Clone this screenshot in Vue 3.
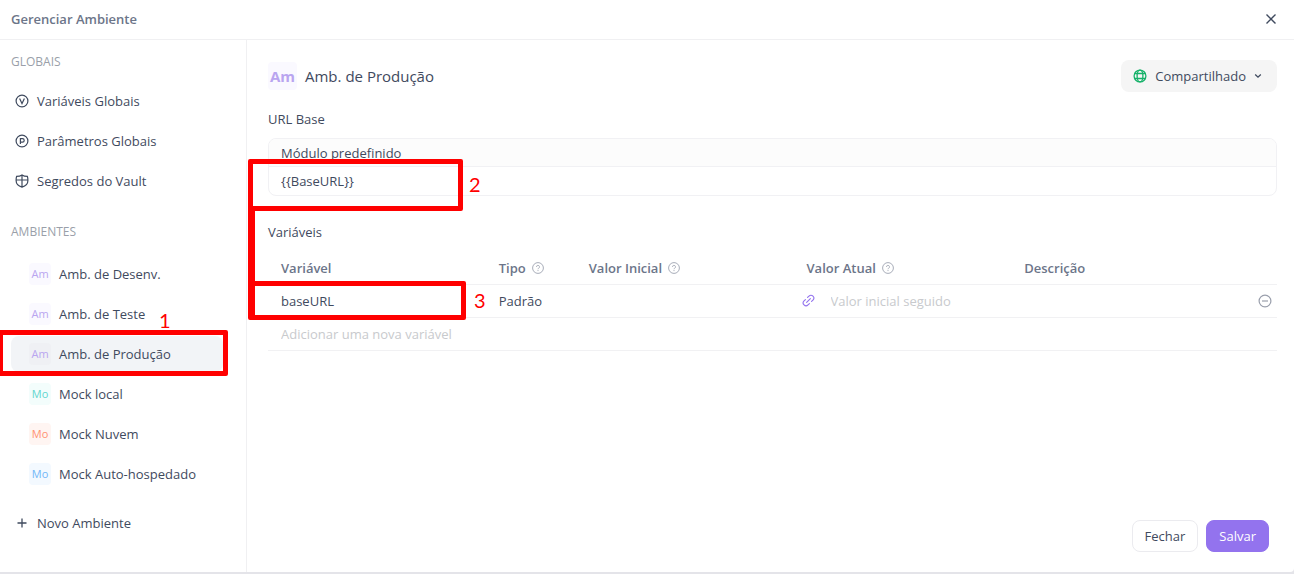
<script setup>
import { ref } from 'vue'

const globals = [
  { name: 'Variáveis Globais', icon: 'variable' },
  { name: 'Parâmetros Globais', icon: 'parameter' },
  { name: 'Segredos do Vault', icon: 'vault' }
]

const environments = [
  { name: 'Amb. de Desenv.', short: 'Am', tone: 'purple' },
  { name: 'Amb. de Teste', short: 'Am', tone: 'purple' },
  { name: 'Amb. de Produção', short: 'Am', tone: 'purple' },
  { name: 'Mock local', short: 'Mo', tone: 'teal' },
  { name: 'Mock Nuvem', short: 'Mo', tone: 'orange' },
  { name: 'Mock Auto-hospedado', short: 'Mo', tone: 'blue' }
]

const columns = [
  { label: 'Variável', help: false },
  { label: 'Tipo', help: true },
  { label: 'Valor Inicial', help: true },
  { label: 'Valor Atual', help: true },
  { label: 'Descrição', help: false }
]

const selected = ref('Amb. de Produção')
const baseUrl = ref('{{BaseURL}}')
const variableName = ref('baseURL')
const newVariable = ref('')
const currentValue = ref('')
</script>

<template>
  <div class="dialog">
    <header class="topbar">
      <h1>Gerenciar Ambiente</h1>
      <button class="plain close" type="button" aria-label="Fechar janela">
        <svg width="12" height="12" viewBox="0 0 12 12" fill="none" stroke="currentColor" stroke-width="1.4">
          <path d="M1.5 1.5l9 9M10.5 1.5l-9 9" />
        </svg>
      </button>
    </header>

    <div class="body">
      <nav class="sidebar">
        <h2>GLOBAIS</h2>
        <ul>
          <li v-for="item in globals" :key="item.name">
            <button class="plain item" type="button">
              <svg width="14" height="14" viewBox="0 0 14 14" fill="none" stroke="currentColor" stroke-width="1.2">
                <template v-if="item.icon === 'variable'">
                  <circle cx="7" cy="7" r="5.9" />
                  <path d="M4.6 4.6L7 9.6l2.4-5" />
                </template>
                <template v-else-if="item.icon === 'parameter'">
                  <circle cx="7" cy="7" r="5.9" />
                  <path d="M5.4 10V4.7h2.1a1.7 1.7 0 010 3.4H5.4" />
                </template>
                <template v-else>
                  <path d="M7 .9C5.500 2 3.500 2.400 1.600 2.400 1.100 3.600 1.100 5 1.100 6.500c0 3.200 2.300 5.500 5.900 6.600 3.600-1.100 5.900-3.400 5.900-6.600 0-1.500 0-2.900-.5-4.100C10.500 2.400 8.500 2 7 .9zM7 1v12M1.200 6h11.600" />
                </template>
              </svg>
              <span>{{ item.name }}</span>
            </button>
          </li>
        </ul>

        <h2 class="second">AMBIENTES</h2>
        <ul class="envs">
          <li v-for="env in environments" :key="env.name">
            <button
              class="plain item env"
              :class="{ active: env.name === selected }"
              type="button"
              @click="selected = env.name"
            >
              <span class="tag" :class="env.tone">{{ env.short }}</span>
              <span>{{ env.name }}</span>
            </button>
          </li>
        </ul>

        <button class="plain item add" type="button">
          <svg width="14" height="14" viewBox="0 0 14 14" fill="none" stroke="currentColor" stroke-width="1.3">
            <path d="M7 2.500v9M2.500 7h9" />
          </svg>
          <span>Novo Ambiente</span>
        </button>
      </nav>

      <main class="content">
        <div class="title-row">
          <span class="tag large purple">Am</span>
          <span class="title">{{ selected }}</span>
          <button class="share" type="button">
            <svg class="globe" width="14" height="14" viewBox="0 0 14 14" fill="none" stroke="currentColor" stroke-width="1.3">
              <circle cx="7" cy="7" r="5.900" />
              <ellipse cx="7" cy="7" rx="2.900" ry="5.900" />
              <path d="M1.700 4.500h10.600M1.700 9.500h10.600" />
            </svg>
            <span>Compartilhado</span>
            <svg width="8" height="8" viewBox="0 0 8 8" fill="none" stroke="currentColor" stroke-width="1.3">
              <path d="M1.200 2.500L4 5.200l2.800-2.700" />
            </svg>
          </button>
        </div>

        <label class="section" for="base-url">URL Base</label>
        <div class="module">
          <div class="module-head">Módulo predefinido</div>
          <input id="base-url" v-model="baseUrl" type="text" />
        </div>

        <h3 class="section variables">Variáveis</h3>
        <table>
          <colgroup>
            <col />
            <col class="type-col" />
            <col />
            <col />
            <col />
            <col class="action-col" />
          </colgroup>
          <thead>
            <tr>
              <th v-for="col in columns" :key="col.label" scope="col">
                <span class="head">
                  {{ col.label }}
                  <svg v-if="col.help" width="12" height="12" viewBox="0 0 12 12" fill="none" stroke="currentColor" stroke-width="1">
                    <circle cx="6" cy="6" r="5.400" />
                    <path d="M4.500 4.900a1.500 1.500 0 112.200 1.300c-.5.3-.7.5-.7 1M6 8.100v1" />
                  </svg>
                </span>
              </th>
              <td></td>
            </tr>
          </thead>
          <tbody>
            <tr>
              <td><input v-model="variableName" type="text" aria-label="Variável" /></td>
              <td>Padrão</td>
              <td></td>
              <td class="current">
                <span class="linked">
                  <svg width="13" height="13" viewBox="0 0 14 14" fill="none" stroke="currentColor" stroke-width="1.2" stroke-linecap="round">
                    <path d="M5 9l4-4M6 3.700l1.500-1.500a3 3 0 014.300 4.300L10.300 8M8 10.300l-1.500 1.500a3 3 0 01-4.300-4.300L3.700 6" />
                  </svg>
                  <input v-model="currentValue" type="text" placeholder="Valor inicial seguido" aria-label="Valor Atual" />
                </span>
              </td>
              <td></td>
              <td class="action">
                <button class="plain remove" type="button" aria-label="Remover variável">
                  <svg width="14" height="14" viewBox="0 0 14 14" fill="none" stroke="currentColor" stroke-width="1.200">
                    <circle cx="7" cy="7" r="5.900" />
                    <path d="M4 7h6" />
                  </svg>
                </button>
              </td>
            </tr>
            <tr>
              <td colspan="6">
                <input v-model="newVariable" type="text" placeholder="Adicionar uma nova variável" aria-label="Nova variável" />
              </td>
            </tr>
          </tbody>
        </table>

        <footer>
          <button class="btn" type="button">Fechar</button>
          <button class="btn primary" type="button">Salvar</button>
        </footer>
      </main>
    </div>

    <div class="mark mark-env"></div>
    <span class="number number-env">1</span>
    <div class="mark mark-url"></div>
    <span class="number number-url">2</span>
    <div class="mark-link"></div>
    <div class="mark mark-variable"></div>
    <span class="number number-variable">3</span>
  </div>
</template>

<style>
html,
body,
#app {
  height: 100%;
}

body {
  background: #e4e4e9;
  overflow: hidden;
}
</style>

<style scoped>
* {
  box-sizing: border-box;
}

.dialog {
  position: relative;
  display: flex;
  flex-direction: column;
  height: calc(100% - 2px);
  background: #fff;
  border-radius: 0 0 4px 0;
  color: #3f4a5e;
  font: 13px/20px "Open Sans", "Noto Sans", sans-serif;
}

button,
input {
  font: inherit;
  color: inherit;
}

button {
  cursor: pointer;
}

.plain {
  padding: 0;
  border: 0;
  background: none;
}

svg {
  flex: none;
  display: block;
}

.topbar {
  display: flex;
  align-items: center;
  justify-content: space-between;
  height: 40px;
  padding: 0 17px 1px 11px;
  border-bottom: 1px solid #f0f0f2;
}

h1 {
  margin: 0;
  color: #6c7589;
  font-size: 13px;
  font-weight: 600;
}

.body {
  display: flex;
  flex: 1;
}

.sidebar {
  width: 247px;
  padding: 12px 23px 0 11px;
  border-right: 1px solid #f0f0f2;
}

h2 {
  margin: 0 0 9px;
  color: #9a9fa9;
  font-size: 12px;
  line-height: 20px;
  font-weight: 400;
}

.second {
  margin-top: 21px;
}

ul {
  margin: 0;
  padding: 0;
  list-style: none;
}

.item {
  display: flex;
  align-items: center;
  gap: 8px;
  width: 100%;
  height: 40px;
  padding-left: 4px;
  text-align: left;
}

.envs {
  padding-top: 3px;
}

.envs li {
  padding: 2px 0;
}

.env {
  height: 36px;
  padding-left: 18px;
  border-radius: 8px;
}

.active {
  background: #f2f4f7;
}

.add {
  margin-top: 9px;
}

.tag {
  width: 22px;
  height: 22px;
  border-radius: 4px;
  font-size: 11px;
  line-height: 22px;
  text-align: center;
}

.purple {
  background: #faf9ff;
  color: #b9a5f0;
}

.active .purple {
  background: #eff0f4;
}

.teal {
  background: #f3fdfc;
  color: #62d6cf;
}

.orange {
  background: #fff5f2;
  color: #ff9272;
}

.blue {
  background: #f3f9ff;
  color: #71b7f8;
}

.large {
  width: 29px;
  height: 28px;
  font-size: 15px;
  font-weight: 700;
  line-height: 28px;
}

.content {
  display: flex;
  flex: 1;
  flex-direction: column;
  min-width: 0;
  padding: 20px 17px 20px 21px;
}

.title-row {
  display: flex;
  align-items: center;
  gap: 8px;
  height: 32px;
  margin-bottom: 17px;
}

.title {
  font-size: 15px;
}

.share {
  display: flex;
  align-items: center;
  gap: 8px;
  height: 32px;
  margin-left: auto;
  padding: 0 15px 0 12px;
  border: 0;
  border-radius: 8px;
  background: #f5f5f5;
}

.globe {
  color: #17b26a;
}

.section {
  margin: 0;
  font-size: 13px;
  font-weight: 400;
  line-height: 20px;
}

.module {
  margin-top: 9px;
  border: 1px solid #f1f1f4;
  border-radius: 8px;
  overflow: hidden;
}

.module-head {
  height: 28px;
  padding: 0 12px;
  border-bottom: 1px solid #f1f1f4;
  background: #fcfcfc;
  line-height: 28px;
}

input {
  display: block;
  width: 100%;
  height: 28px;
  padding: 0;
  border: 0;
  outline: 0;
  background: none;
}

input::placeholder {
  color: #c8cacd;
  opacity: 1;
}

.module input {
  padding: 0 12px;
}

.variables {
  margin-top: 26px;
}

table {
  width: 100%;
  margin-top: 10px;
  border-collapse: collapse;
  table-layout: fixed;
}

.type-col {
  width: 90px;
}

.action-col {
  width: 48px;
}

tr {
  height: 33px;
  border-bottom: 1px solid #f1f1f3;
}

thead tr {
  height: 32px;
}

th,
td {
  padding: 0 0 0 13px;
  text-align: left;
}

th {
  color: #6c7589;
  font-weight: 600;
}

.head {
  display: flex;
  align-items: center;
  gap: 6px;
}

.head svg {
  color: #a8adb9;
}

.current {
  padding-left: 8px;
}

.linked {
  display: flex;
  align-items: center;
  gap: 16px;
}

.linked svg {
  color: #9373ee;
}

.action {
  padding: 0 5px 0 0;
}

.remove {
  display: block;
  margin-left: auto;
  color: #9a9fac;
}

footer {
  display: flex;
  justify-content: flex-end;
  gap: 8px;
  margin-top: auto;
  padding-right: 8px;
}

.btn {
  height: 32px;
  padding: 0 12px;
  border: 1px solid #ebebef;
  border-radius: 8px;
  background: #fff;
}

.primary {
  border-color: #9373ee;
  background: #9373ee;
  color: #fff;
}

/* Numbered tutorial highlights drawn over the dialog */
.mark {
  position: absolute;
  border: 5px solid #f00;
  border-radius: 2px;
  pointer-events: none;
}

.mark-env {
  top: 330px;
  left: -2px;
  width: 230px;
  height: 46px;
}

.mark-url {
  top: 159px;
  left: 248px;
  width: 215px;
  height: 52px;
}

.mark-link {
  position: absolute;
  top: 208px;
  left: 248px;
  width: 7px;
  height: 110px;
  background: #f00;
  pointer-events: none;
}

.mark-variable {
  top: 281px;
  left: 248px;
  width: 218px;
  height: 39px;
}

.number {
  position: absolute;
  color: #f00;
  font-family: Lato, sans-serif;
  font-size: 20px;
  line-height: 24px;
}

.number-env {
  top: 308px;
  left: 159px;
}

.number-url {
  top: 172px;
  left: 469px;
}

.number-variable {
  top: 288px;
  left: 474px;
}
</style>
